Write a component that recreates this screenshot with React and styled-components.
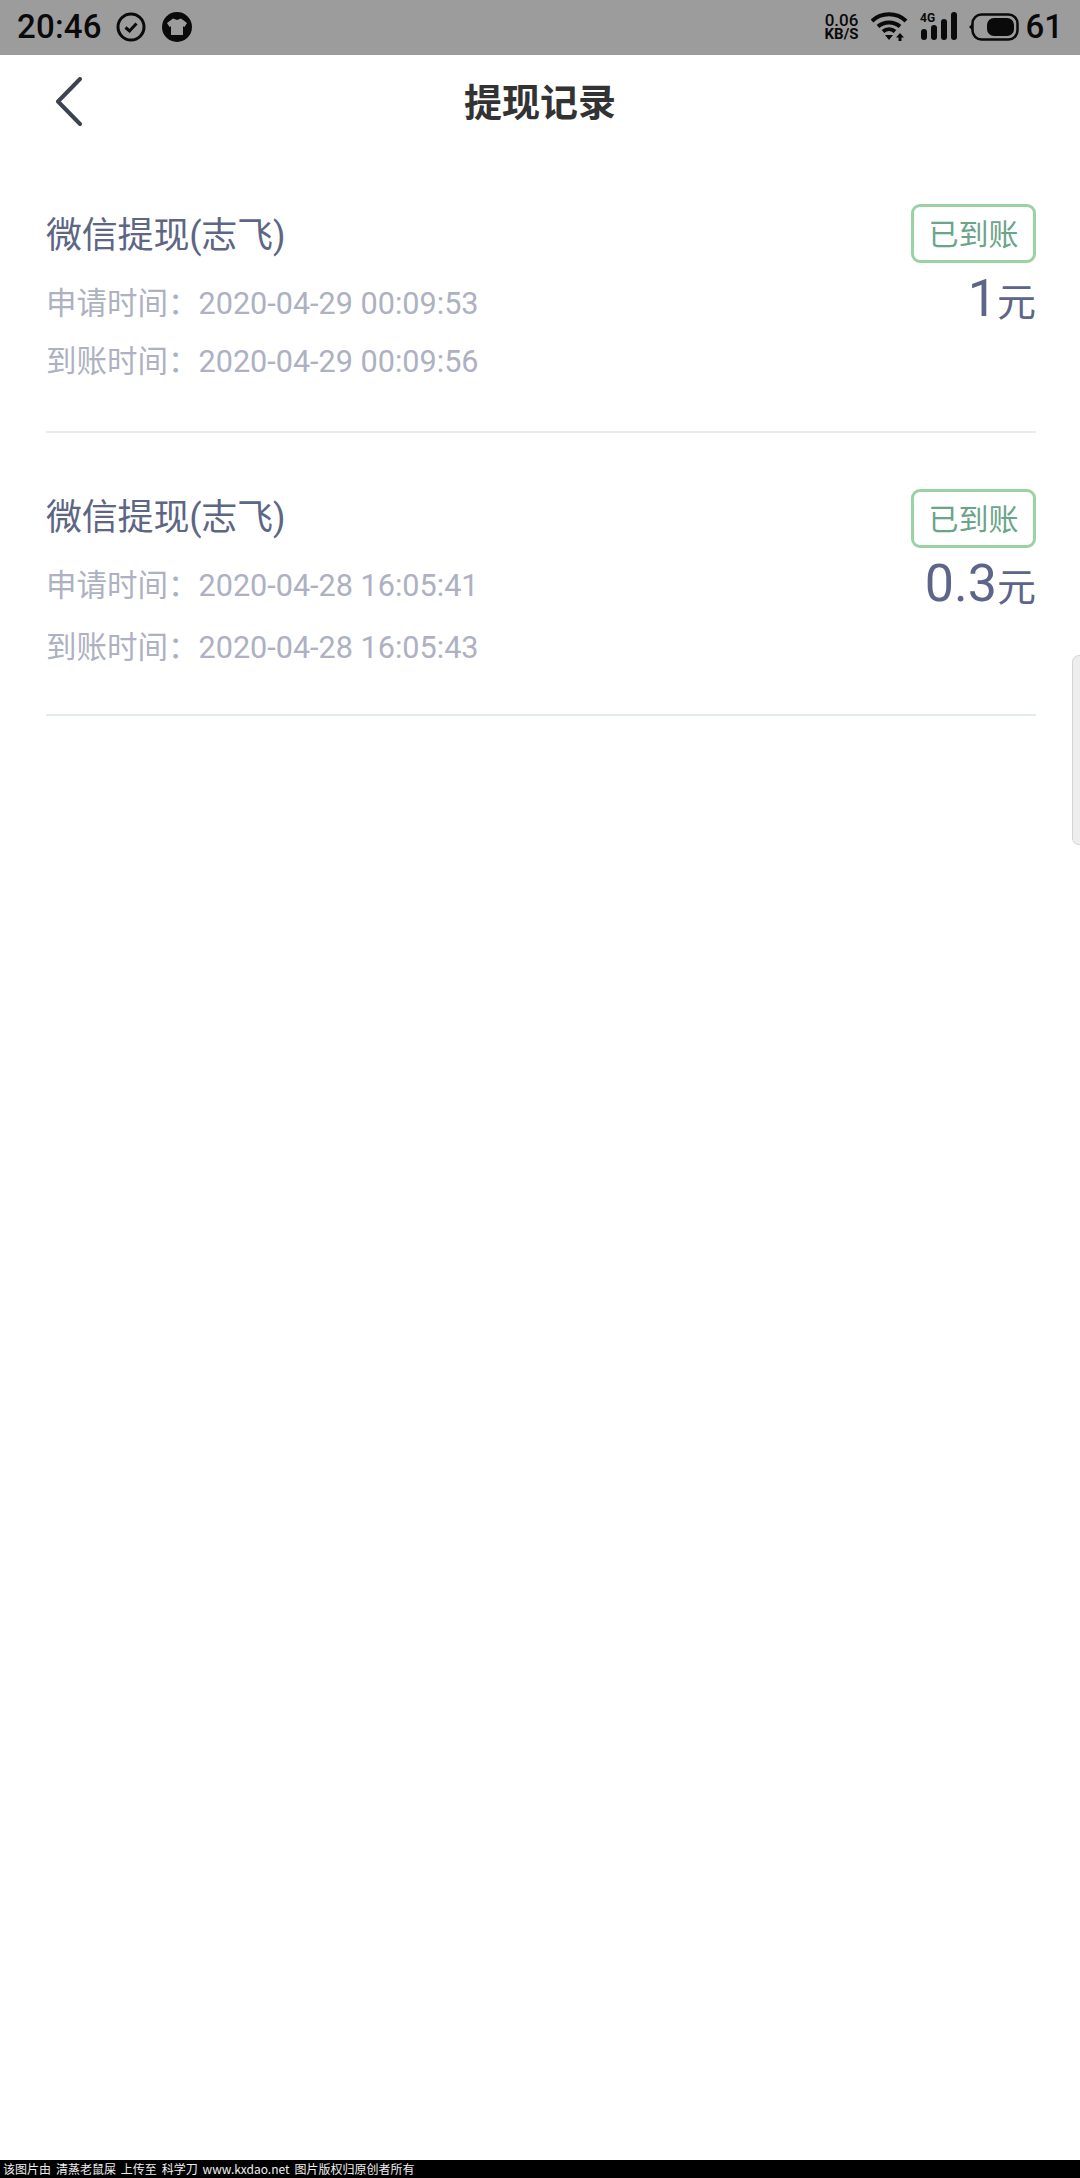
import React from "react";
import styled, { createGlobalStyle } from "styled-components";

const Global = createGlobalStyle`
  html, body { margin: 0; padding: 0; background: #fff; }
  body { font-family: Roboto, "Noto Sans CJK SC", sans-serif; }
`;
const Page = styled.div`
  position: relative;
  width: 1080px;
  height: 2178px;
  display: flex;
  flex-direction: column;
  background: #fff;
  overflow: hidden;
`;
const StatusBar = styled.div`
  height: 55px;
  flex: none;
  background: #9c9c9c;
  display: flex;
  align-items: center;
  padding: 0 17px 0 17px;
  color: #0a0a0a;
`;
const Time = styled.span`
  font-size: 33px;
  font-weight: 500;
  margin-right: 14px;
  letter-spacing: 0.2px;
  margin-top: -2px;
`;
const StatusIcon = styled.svg`
  display: block;
  flex: none;
  margin-left: ${(p) => p.$ml || 0}px;
  margin-top: ${(p) => p.$mt || 0}px;
`;
const Spacer = styled.div`
  flex: 1;
`;
const Speed = styled.div`
  display: flex;
  flex-direction: column;
  align-items: center;
  font-size: 15px;
  line-height: 14px;
  font-weight: 700;
  margin-top: -2px;
  & > span:first-child { font-size: 17px; font-weight: 500; }
`;
const Battery = styled.span`
  font-size: 33px;
  font-weight: 500;
  margin-left: 6px;
  margin-top: -2px;
`;
const Header = styled.header`
  height: 96px;
  flex: none;
  display: flex;
  align-items: center;
  justify-content: center;
  position: relative;
`;
const Back = styled.svg`
  position: absolute;
  left: 54px;
  top: 22px;
`;
const Title = styled.h1`
  margin: 0 0 7px;
  font-size: 38px;
  font-weight: 700;
  color: #333;
  font-family: "Noto Sans CJK SC", sans-serif;
`;
const List = styled.main`
  padding: 0 44px 0 46px;
`;
const Row = styled.section`
  height: 282px;
  box-sizing: border-box;
  border-bottom: 2px solid ${(p) => p.$line};
  padding-top: ${(p) => p.$top}px;
  display: flex;
  justify-content: space-between;
  margin-bottom: 1px;
`;
const Left = styled.div`
  display: flex;
  flex-direction: column;
  padding-top: ${(p) => p.$offset}px;
`;
const Name = styled.div`
  font-size: 36px;
  line-height: 50px;
  letter-spacing: -0.2px;
  color: #5d6684;
  margin-bottom: 21px;
`;
const Meta = styled.div`
  font-size: 30.5px;
  line-height: 44px;
  color: #adb1c1;
  margin-bottom: ${(p) => p.$gap}px;
  & > b { font-weight: 400; font-size: 30.6px; }
`;
const Right = styled.div`
  display: flex;
  flex-direction: column;
  align-items: flex-end;
`;
const Badge = styled.div`
  width: 125px;
  height: 59px;
  box-sizing: border-box;
  border: 3px solid #9ad3a3;
  border-radius: 9px;
  display: flex;
  align-items: center;
  justify-content: center;
  font-size: 30px;
  color: #6aa58a;
  padding-bottom: 4px;
`;
const Amount = styled.div`
  font-size: 52px;
  line-height: 60px;
  margin-top: 6px;
  color: #5d6589;
  display: flex;
  align-items: baseline;
  & > small { font-size: 39px; }
`;
const Handle = styled.div`
  position: absolute;
  right: -2px;
  top: 655px;
  width: 10px;
  height: 190px;
  box-sizing: border-box;
  background: #eeeeee;
  border: 1px solid #d4d4d4;
  border-radius: 7px 0 0 7px;
`;
const Footer = styled.footer`
  position: absolute;
  left: 0;
  right: 0;
  bottom: 0;
  height: 18px;
  background: #000;
  color: #eee;
  font-size: 12px;
  line-height: 18px;
  padding-left: 3px;
  white-space: pre;
  word-spacing: 2.2px;
  font-family: "Noto Sans CJK SC", sans-serif;
`;

const records = [
  { top: 53, offset: 7, apply: "2020-04-29 00:09:53", arrive: "2020-04-29 00:09:56", amount: "1", line: "#e8eaec", gap: 14 },
  { top: 55, offset: 4, apply: "2020-04-28 16:05:41", arrive: "2020-04-28 16:05:43", amount: "0.3", line: "#e3ebec", gap: 18 },
];

export default function App() {
  return (
    <Page>
      <Global />
      <StatusBar>
        <Time>20:46</Time>
        <StatusIcon width="30" height="30" viewBox="0 0 30 30" $mt={-2}>
          <circle cx="15" cy="15" r="13" fill="none" stroke="#0a0a0a" strokeWidth="3" />
          <path d="M9.500 15.500l4 3.500 7-7.500" fill="none" stroke="#0a0a0a" strokeWidth="3" />
        </StatusIcon>
        <StatusIcon width="30" height="30" viewBox="0 0 30 30" $ml={16} $mt={-2}>
          <circle cx="15" cy="15" r="15" fill="#0a0a0a" />
          <path d="M11 6.500l4 1.500 4-1.500 6 4.500-2.500 4-1.500-.7V23H9v-8.700L7.500 15 5 11z" fill="#9c9c9c" />
        </StatusIcon>
        <Spacer />
        <Speed>
          <span>0.06</span>
          <span>KB/S</span>
        </Speed>
        <StatusIcon width="38" height="30" viewBox="0 0 38 30" $ml={13} $mt={-4}>
          <path d="M1 10C10 1 26 1 35 10M7 15.500C13 10 23 10 29 15.500M12 20.500C15.500 17.500 20.500 17.500 24 20.500" fill="none" stroke="#0a0a0a" strokeWidth="4" />
          <path d="M14 24h8l-4 5zM29 22l4 4.500h-2.500V30h-3v-3.500H25z" fill="#0a0a0a" />
        </StatusIcon>
        <StatusIcon width="40" height="30" viewBox="0 0 40 30" $ml={11} $mt={-4}>
          <text x="0" y="11" fontSize="12" fontWeight="700" fontFamily="Roboto" fill="#0a0a0a">4G</text>
          <rect x="1" y="18" width="6" height="11" rx="3" fill="#0a0a0a" />
          <rect x="11" y="14" width="6" height="15" rx="3" fill="#0a0a0a" />
          <rect x="21" y="8" width="6" height="21" rx="3" fill="#0a0a0a" />
          <rect x="31" y="1" width="6" height="28" rx="3" fill="#0a0a0a" />
        </StatusIcon>
        <StatusIcon width="52" height="28" viewBox="0 0 52 28" $ml={7} $mt={-2}>
          <path d="M2 14l3-3v6z" fill="#0a0a0a" />
          <rect x="5.500" y="1.500" width="45" height="25" rx="9" fill="none" stroke="#0a0a0a" strokeWidth="2.500" />
          <rect x="20" y="5" width="27" height="18" rx="7" fill="#0a0a0a" />
        </StatusIcon>
        <Battery>61</Battery>
      </StatusBar>
      <Header>
        <Back width="30" height="52" viewBox="0 0 30 52">
          <path d="M26 2L4 24.500 26 47" fill="none" stroke="#3c4452" strokeWidth="4" strokeLinecap="round" strokeLinejoin="round" />
        </Back>
        <Title>提现记录</Title>
      </Header>
      <List>
        {records.map((r) => (
          <Row key={r.apply} $top={r.top} $line={r.line}>
            <Left $offset={r.offset}>
              <Name>微信提现(志飞)</Name>
              <Meta $gap={r.gap}>申请时间：<b>{r.apply}</b></Meta>
              <Meta $gap={0}>到账时间：<b>{r.arrive}</b></Meta>
            </Left>
            <Right>
              <Badge>已到账</Badge>
              <Amount>{r.amount}<small>元</small></Amount>
            </Right>
          </Row>
        ))}
      </List>
      <Handle />
      <Footer>{"该图片由 清蒸老鼠屎 上传至 科学刀 www.kxdao.net 图片版权归原创者所有"}</Footer>
    </Page>
  );
}
